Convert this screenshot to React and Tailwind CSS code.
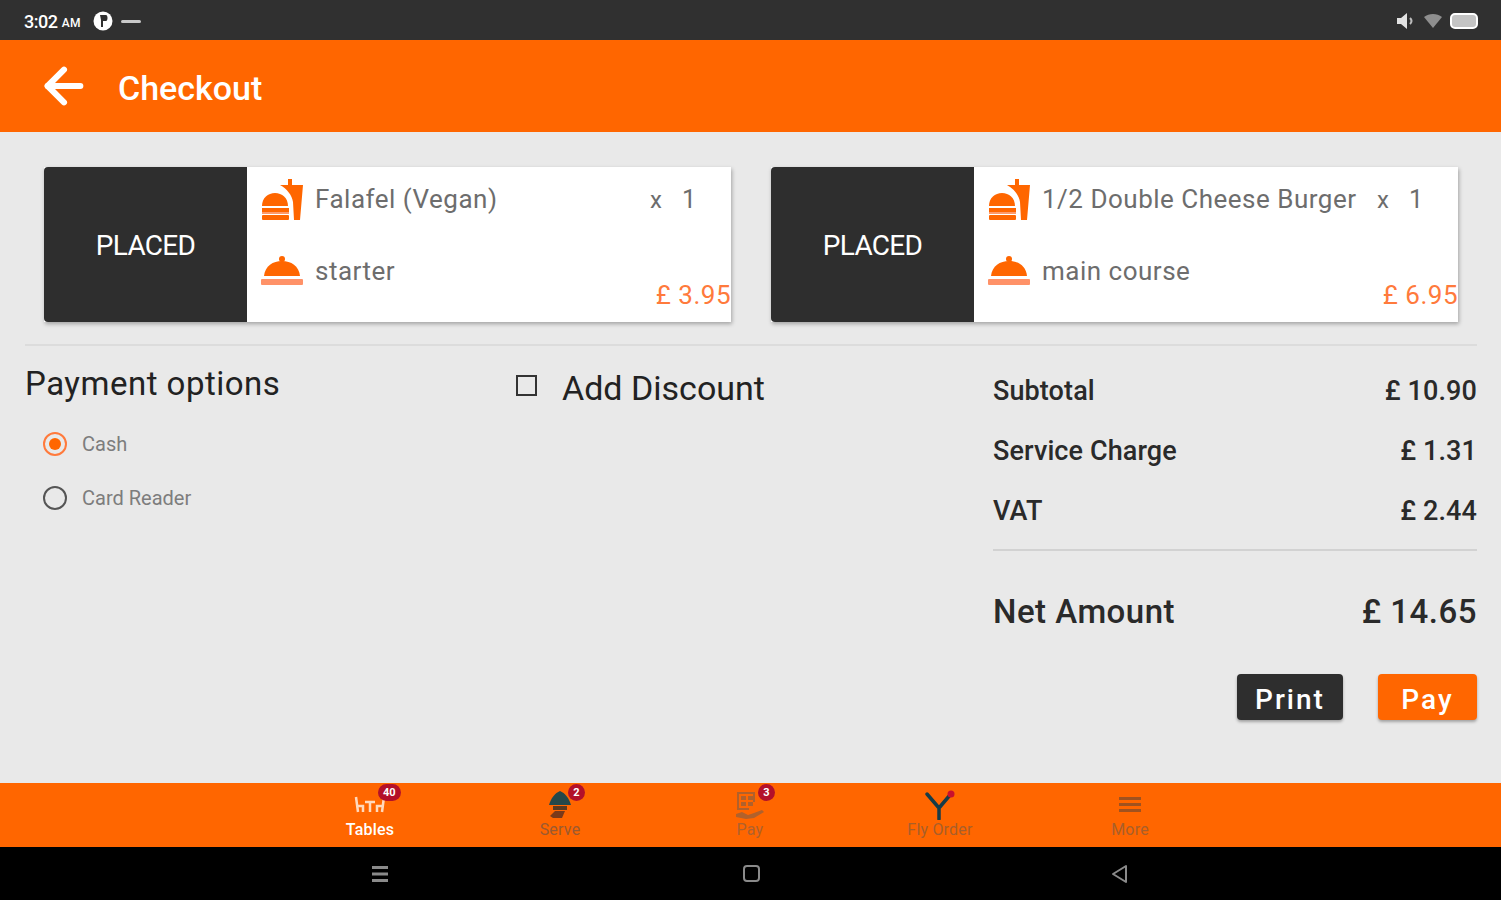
import { ArrowLeft } from 'lucide-react';

const orders = [
  { name: 'Falafel (Vegan)', course: 'starter', price: '£ 3.95' },
  { name: '1/2 Double Cheese Burger', course: 'main course', price: '£ 6.95' },
];

const totals = [
  { label: 'Subtotal', value: '£ 10.90' },
  { label: 'Service Charge', value: '£ 1.31' },
  { label: 'VAT', value: '£ 2.44' },
];

function BurgerIcon() {
  return (
    <svg width="42" height="42" viewBox="0 0 42 42" className="shrink-0">
      <path d="M1 27c0-8 6-13 13-13s13 5 13 13z" fill="#ff6600" />
      <rect x="1" y="29" width="27" height="4" fill="#ff6600" />
      <rect x="1" y="33" width="27" height="2" fill="#ff9a68" />
      <rect x="1" y="36" width="27" height="5" rx="1" fill="#ff6600" />
      <path d="M19 6h8V0h4v6h11l-3 35h-6l-1-18c-1-7-6-13-13-17z" fill="#ff6600" />
    </svg>
  );
}

function ClocheIcon() {
  return (
    <svg width="42" height="32" viewBox="0 0 42 32" className="shrink-0">
      <circle cx="21" cy="4" r="3" fill="#ff6600" />
      <path d="M3 21C4 11 12 6 21 6s17 5 18 15z" fill="#ff6600" />
      <rect x="0" y="24" width="42" height="6" rx="1" fill="#ff9268" />
    </svg>
  );
}

function OrderCard({ order }) {
  return (
    <div className="flex w-[687px] h-[155px] bg-white shadow-[1px_2px_4px_rgba(0,0,0,0.3)]">
      <div className="w-[203px] shrink-0 bg-[#2e2e2e] flex items-center justify-center pt-[3px] text-white text-[28px] tracking-tight rounded-l-sm">
        PLACED
      </div>
      <div className="flex-1 flex flex-col pl-[14px]">
        <div className="flex items-center h-[42px] mt-[12px] gap-[12px]">
          <BurgerIcon />
          <span className="w-[323px] -mt-[2px] text-[#6d6d6d] text-[26px] tracking-[0.5px] whitespace-nowrap">{order.name}</span>
          <span className="w-[20px] text-[#6d6d6d] text-[24px]">x</span>
          <span className="text-[#6d6d6d] text-[25px]">1</span>
        </div>
        <div className="flex items-start mt-[34px] gap-[12px]">
          <ClocheIcon />
          <span className="text-[#6d6d6d] text-[26px] tracking-[0.5px] leading-[32px]">{order.course}</span>
          <span className="ml-auto mt-[24px] text-[#ff7a3c] text-[26px] tracking-[0.5px] leading-[32px]">{order.price}</span>
        </div>
      </div>
    </div>
  );
}

function NavItem({ label, labelColor, badge, icon }) {
  return (
    <div className="relative w-[190px] flex flex-col items-center">
      <div className="h-[30px] mt-[7px] flex items-center justify-center">{icon}</div>
      <span className={`text-[16px] leading-[20px] tracking-[0.2px] ${labelColor}`}>{label}</span>
      {badge && (
        <span className="absolute top-[1px] left-[103px] min-w-[17px] h-[17px] px-[5px] rounded-full bg-[#b3102a] text-white text-[11px] font-bold leading-[17px] text-center">
          {badge}
        </span>
      )}
    </div>
  );
}

export default function App() {
  return (
    <div className="w-[1501px] h-[900px] flex flex-col bg-[#e9e9e9] overflow-hidden font-['Roboto',sans-serif]">
      {/* status bar */}
      <div className="h-10 shrink-0 bg-[#303030] flex items-center justify-between pl-[24px] pr-[23px] pt-[2px]">
        <div className="flex items-center text-white">
          <span className="text-[18px] font-medium tracking-tight">3:02</span>
          <span className="text-[12px] font-medium ml-[4px] mt-[4px] tracking-[0.5px]">AM</span>
          <svg width="20" height="20" viewBox="0 0 20 20" className="ml-[12px]">
            <circle cx="10" cy="10" r="9.5" fill="#fff" />
            <path d="M7 4h6c2 0 2 6 0 6h-3v6H8V9z" fill="#303030" />
          </svg>
          <span className="w-[20px] h-[3px] ml-[8px] bg-[#c9c9c9] rounded-sm" />
        </div>
        <div className="flex items-center gap-[7px]">
          <svg width="20" height="18" viewBox="0 0 20 18">
            <path d="M1 6h4l6-5v16l-6-5H1z" fill="#e2e2e2" />
            <path d="M14 6c2 2 2 4 0 6" stroke="#bbb" strokeWidth="2" fill="none" />
          </svg>
          <svg width="20" height="18" viewBox="0 0 20 18">
            <path d="M1 5c5-4 13-4 18 0l-9 11z" fill="#8e8e8e" />
          </svg>
          <div className="w-[28px] h-[16px] rounded-[5px] bg-[#c4c4c4] border-2 border-white" />
        </div>
      </div>

      {/* header */}
      <div className="h-[92px] shrink-0 bg-[#ff6600] flex items-center pl-[36px] pt-[4px]">
        <ArrowLeft size={56} strokeWidth={2.6} className="text-white -mt-[4px]" />
        <span className="ml-[26px] text-white text-[34px] font-medium leading-none">Checkout</span>
      </div>

      {/* content */}
      <div className="flex-1 flex flex-col">
        <div className="flex gap-[40px] pl-[44px] pt-[35px]">
          {orders.map((order) => (
            <OrderCard key={order.name} order={order} />
          ))}
        </div>
        <div className="h-[2px] mt-[22px] mx-[25px] w-[1452px] bg-[#dcdcdc]" />

        <div className="flex pl-[25px] pr-[24px]">
          <div className="w-[491px] pt-[18px]">
            <div className="text-[#222] text-[33px] leading-[40px] tracking-[0.5px]">Payment options</div>
            <div className="flex items-center mt-[26px] ml-[18px] h-[28px]">
              <span className="w-[24px] h-[24px] rounded-full border-2 border-[#ff7a3c] flex items-center justify-center">
                <span className="w-[12px] h-[12px] rounded-full bg-[#ff6600]" />
              </span>
              <span className="ml-[15px] text-[#7d7d7d] text-[20px]">Cash</span>
            </div>
            <div className="flex items-center mt-[26px] ml-[18px] h-[28px]">
              <span className="w-[24px] h-[24px] rounded-full border-2 border-[#555]" />
              <span className="ml-[15px] text-[#7d7d7d] text-[20px]">Card Reader</span>
            </div>
          </div>

          <div className="w-[477px] pt-[20px] flex items-start">
            <span className="w-[21px] h-[21px] mt-[9px] border-2 border-[#333]" />
            <span className="ml-[25px] mt-[2px] text-[#222] text-[34px] leading-[40px]">Add Discount</span>
          </div>

          <div className="flex-1 pt-[15px]">
            {totals.map((row) => (
              <div key={row.label} className="flex justify-between items-center h-[60px] text-[#2a2a2a] text-[27px] font-medium tracking-[0.1px]">
                <span>{row.label}</span>
                <span>{row.value}</span>
              </div>
            ))}
            <div className="h-[2px] bg-[#d2d2d2] mt-[8px]" />
            <div className="flex justify-between items-center h-[40px] mt-[41px] text-[#2a2a2a] text-[33px] font-medium tracking-[0.5px]">
              <span>Net Amount</span>
              <span>£ 14.65</span>
            </div>
            <div className="flex justify-end gap-[35px] mt-[42px]">
              <button className="w-[106px] h-[46px] pt-[5px] rounded-[4px] bg-[#2e2e2e] text-white text-[28px] font-medium tracking-[2px] shadow-[0_2px_3px_rgba(0,0,0,0.3)]">
                Print
              </button>
              <button className="w-[99px] h-[46px] pt-[5px] rounded-[4px] bg-[#ff6600] text-white text-[28px] font-medium tracking-[2px] shadow-[0_2px_3px_rgba(0,0,0,0.3)]">
                Pay
              </button>
            </div>
          </div>
        </div>
      </div>

      {/* bottom nav */}
      <div className="h-16 shrink-0 bg-[#ff6600] flex pl-[275px]">
        <NavItem
          label="Tables"
          labelColor="text-white font-medium"
          badge="40"
          icon={
            <svg width="32" height="18" viewBox="0 0 32 18" fill="none" stroke="#ffd9bd" strokeWidth="2.5">
              <path d="M2 1l2 15M2 10h7v6M11 6h10M16 6v10M30 1l-2 15M30 10h-7v6" />
            </svg>
          }
        />
        <NavItem
          label="Serve"
          labelColor="text-[#9a5a30]"
          badge="2"
          icon={
            <svg width="26" height="30" viewBox="0 0 26 30">
              <path d="M2 15C4 8 8 3 13 1c5 2 9 7 11 14z" fill="#24484a" />
              <path d="M6 16h14v4H6z" fill="#5a3a20" />
              <path d="M3 26l5-5h10l-3 7H6z" fill="#7a3a1a" />
            </svg>
          }
        />
        <NavItem
          label="Pay"
          labelColor="text-[#b0612c]"
          badge="3"
          icon={
            <svg width="30" height="30" viewBox="0 0 30 30" fill="#b0612c">
              <path d="M2 2h18v2H2zM2 2h2v18H2zM2 18h12v2H2zM18 2h2v10h-2z" />
              <rect x="6" y="6" width="5" height="4" />
              <rect x="13" y="6" width="5" height="4" />
              <rect x="6" y="12" width="5" height="4" />
              <rect x="13" y="12" width="5" height="4" />
              <path d="M1 24l6-2 6 3 6-2 8-3 2 2-10 6-8 1-10-2z" />
            </svg>
          }
        />
        <NavItem
          label="Fly Order"
          labelColor="text-[#a85f2a]"
          icon={
            <svg width="34" height="30" viewBox="0 0 34 30">
              <path d="M4 4l12 14v11M27 5L16 18" fill="none" stroke="#163c48" strokeWidth="3.5" strokeLinecap="round" />
              <circle cx="28" cy="4" r="3.5" fill="#c8102e" />
            </svg>
          }
        />
        <NavItem
          label="More"
          labelColor="text-[#a85f2a]"
          icon={
            <svg width="22" height="18" viewBox="0 0 22 18" fill="#a0521f">
              <rect y="1" width="22" height="3" />
              <rect y="7" width="22" height="3" />
              <rect y="13" width="22" height="3" />
            </svg>
          }
        />
      </div>

      {/* android nav */}
      <div className="h-[53px] shrink-0 bg-black flex items-center pl-[372px]">
        <svg width="16" height="18" viewBox="0 0 16 18" fill="#8a8a8a">
          <rect y="1" width="16" height="3" />
          <rect y="7.5" width="16" height="3" />
          <rect y="14" width="16" height="3" />
        </svg>
        <span className="w-[17px] h-[17px] ml-[355px] border-2 border-[#8a8a8a] rounded-[4px]" />
        <svg width="18" height="20" viewBox="0 0 18 20" className="ml-[350px]" fill="none" stroke="#8a8a8a" strokeWidth="2" strokeLinejoin="round">
          <path d="M16 2v16L3 10z" />
        </svg>
      </div>
    </div>
  );
}
